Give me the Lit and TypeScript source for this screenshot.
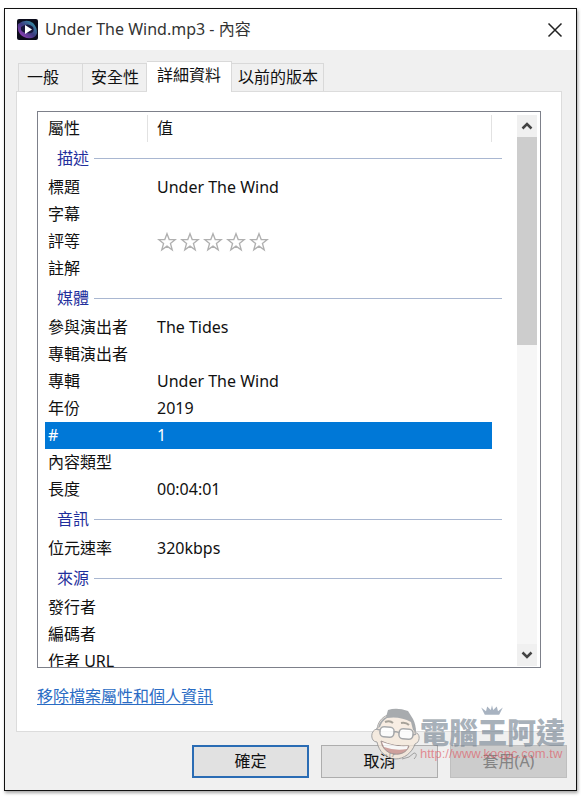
import { LitElement, html, css } from "lit";
import { customElement, state } from "lit/decorators.js";
import { classMap } from "lit/directives/class-map.js";

interface Row {
  name: string;
  value?: string;
  stars?: boolean;
}
interface Group {
  title: string;
  rows: Row[];
}

const GROUPS: Group[] = [
  {
    title: "描述",
    rows: [
      { name: "標題", value: "Under The Wind" },
      { name: "字幕" },
      { name: "評等", stars: true },
      { name: "註解" },
    ],
  },
  {
    title: "媒體",
    rows: [
      { name: "參與演出者", value: "The Tides" },
      { name: "專輯演出者" },
      { name: "專輯", value: "Under The Wind" },
      { name: "年份", value: "2019" },
      { name: "#", value: "1" },
      { name: "內容類型" },
      { name: "長度", value: "00:04:01" },
    ],
  },
  { title: "音訊", rows: [{ name: "位元速率", value: "320kbps" }] },
  {
    title: "來源",
    rows: [{ name: "發行者" }, { name: "編碼者" }, { name: "作者 URL" }],
  },
];

const TABS = ["一般", "安全性", "詳細資料", "以前的版本"];

@customElement("site-watermark")
export class SiteWatermark extends LitElement {
  static styles = css`
    :host {
      display: flex;
      align-items: flex-end;
      pointer-events: none;
    }
    .face {
      flex: none;
      width: 50px;
      height: 54px;
      opacity: 0.75;
    }
    .words {
      display: flex;
      flex-direction: column;
      white-space: nowrap;
    }
    .crown {
      width: 24px;
      height: 12px;
      align-self: center;
      opacity: 0.7;
    }
    .name {
      font: 900 29px/30px "Noto Sans CJK TC", sans-serif;
      color: rgba(110, 124, 140, 0.6);
    }
    .url {
      font: 13px/16px "Liberation Sans", sans-serif;
      color: rgba(225, 80, 90, 0.6);
    }
  `;

  render() {
    return html`
      <svg class="face" viewBox="0 0 50 54" aria-hidden="true">
        <path d="M7 21C8 14 12 9 18 7l20 3c5 3 7 8 7 15 5-1 6 9 0 11-3 9-11 15-20 15-9-1-16-7-18-17C0 34 0 22 7 21z" fill="#f6e8da" stroke="#8a8a8a" />
        <path d="M8 20c1-5 4-9 8-11l2-7q9-3 20 1l5 8c2 4 3 8 3 13l-3-2-2-8q-11-6-24-4-5 3-7 9z" fill="#8b8f94" />
        <path d="M15 14q5-2 8 1M31 15q5-1 8 2" fill="none" stroke="#8a8378" stroke-width="2" />
        <rect x="10" y="19" width="14" height="10" rx="4" fill="#fff" stroke="#8d8f92" stroke-width="1.500" transform="rotate(5 17 24)" />
        <rect x="29" y="21" width="14" height="10" rx="4" fill="#fff" stroke="#8d8f92" stroke-width="1.500" transform="rotate(5 36 26)" />
        <path d="M24 24q3-1 5 1M10 22l-4-1M43 27l3-1" fill="none" stroke="#8d8f92" stroke-width="1.500" />
        <path d="M11 33q13 6 28 5c-2 6-8 9-15 8s-12-6-13-13z" fill="#c88b86" stroke="#8a7a78" />
        <path d="M12 34q13 5 26 4l-1 3q-12 2-23-2z" fill="#fff" />
        <path d="M32 51q8-1 12-6c3 0 3 3 0 6" fill="none" stroke="#8a8a8a" />
      </svg>
      <div class="words">
        <svg class="crown" viewBox="0 0 20 10" aria-hidden="true">
          <path d="M1 3l4 3 1-4 3 3 1-4 1 4 3-3 1 4 4-3-3 6H4z" fill="#8494a8" />
        </svg>
        <span class="name">電腦王阿達</span>
        <span class="url">http://www.kocpc.com.tw</span>
      </div>
    `;
  }
}

@customElement("app-root")
export class AppRoot extends LitElement {
  @state() private tab = "詳細資料";
  @state() private selected = "#";

  static styles = css`
    :host {
      display: block;
      box-sizing: border-box;
      height: 100vh;
      padding: 8px 4px 9px;
      background: #fff;
      color: #111;
      font: 16px/27px "Noto Sans", "Noto Sans CJK TC", sans-serif;
    }
    * {
      box-sizing: border-box;
    }
    button {
      font: inherit;
      color: inherit;
      padding: 0;
      margin: 0;
    }
    .window {
      position: relative;
      display: flex;
      flex-direction: column;
      height: 100%;
      border: 1px solid #111;
      background: #f0f0f0;
      box-shadow: 1px 2px 3px rgba(0, 0, 0, 0.35);
    }
    .titlebar {
      flex: none;
      display: flex;
      align-items: center;
      height: 41px;
      padding: 0 13px 0 12px;
      background: #fff;
    }
    .app-icon {
      width: 21px;
      height: 21px;
      margin-right: 7px;
    }
    .title {
      flex: 1;
      margin: 0;
      font-size: 16px;
      font-weight: 400;
      color: #333;
    }
    .close {
      display: flex;
      border: 0;
      background: none;
    }
    .close svg {
      width: 16px;
      height: 16px;
    }
    .tabs {
      flex: none;
      display: flex;
      align-items: flex-end;
      height: 41px;
      padding: 0 13px;
    }
    .tab {
      height: 28px;
      padding: 0 7px 0 8px;
      border: 1px solid #d9d9d9;
      border-left-width: 0;
      border-bottom: 0;
      background: #f0f0f0;
      text-align: left;
    }
    .tab:first-child {
      border-left-width: 1px;
      padding-right: 23px;
    }
    .tab:last-child {
      padding-left: 6px;
      padding-right: 5px;
    }
    .tab.active {
      height: 31px;
      margin-bottom: -1px;
      padding: 0 10px 4px;
      background: #fff;
      z-index: 1;
    }
    .pane {
      flex: 1;
      min-height: 0;
      display: flex;
      flex-direction: column;
      margin: 0 14px 0 11px;
      padding: 19px 20px 21px;
      border: 1px solid #dcdcdc;
      background: #fff;
    }
    .list {
      flex: 1;
      min-height: 0;
      display: flex;
      border: 1px solid #7d808a;
      padding: 0 3px 0 7px;
    }
    .viewport {
      flex: 1;
      overflow: hidden;
      margin-right: 15px;
    }
    table {
      width: 100%;
      table-layout: fixed;
      border-collapse: collapse;
    }
    .col-name {
      width: 103px;
    }
    .col-rest {
      width: 10px;
    }
    th,
    td {
      height: 27px;
      padding: 0;
      font-weight: 400;
      text-align: left;
      white-space: nowrap;
    }
    .head {
      height: 30px;
      padding: 3px 0 0;
    }
    .cell {
      display: block;
      padding: 0 3px;
      border-right: 1px solid #e2e2e2;
    }
    .value {
      padding-left: 9px;
    }
    .name {
      padding-left: 3px;
    }
    .group {
      height: 32px;
      padding-left: 12px;
      color: #1f2f9c;
    }
    .group-line {
      display: flex;
      align-items: center;
      gap: 5px;
    }
    .group-line::after {
      content: "";
      flex: 1;
      height: 1px;
      background: #a9b7d1;
    }
    .selected .name,
    .selected .value {
      background: #0078d7;
      color: #fff;
    }
    .stars {
      display: flex;
      gap: 3px;
    }
    .stars svg {
      width: 20px;
      height: 20px;
    }
    .scrollbar {
      display: flex;
      flex-direction: column;
      width: 20px;
      margin: 3px 0 1px;
      background: #f6f6f6;
    }
    .scrollbar button {
      flex: none;
      display: flex;
      align-items: center;
      justify-content: center;
      height: 22px;
      border: 0;
      background: #f0f0f0;
    }
    .scrollbar svg {
      width: 12px;
      height: 8px;
    }
    .track {
      flex: 1;
    }
    .thumb {
      height: 41%;
      background: #cdcdcd;
    }
    .remove {
      align-self: flex-start;
      margin-top: 15px;
      color: #2a6cc4;
      text-underline-offset: 2px;
    }
    .actions {
      flex: none;
      display: flex;
      justify-content: flex-end;
      gap: 12px;
      padding: 13px 9px 12px;
    }
    .action {
      width: 117px;
      height: 33px;
      border: 1px solid #adadad;
      background: #e1e1e1;
    }
    .action.primary {
      border: 2px solid #2a6cb4;
    }
    .action:disabled {
      background: #ccc;
      border-color: #bfbfbf;
      color: #838383;
    }
    site-watermark {
      position: absolute;
      right: 11px;
      bottom: 28px;
    }
  `;

  private star() {
    return html`<svg viewBox="0 0 18 18" aria-hidden="true">
      <path d="M9 1.500l2 5.300h5.500l-4.400 3.500 1.600 5.700L9 12.700l-4.700 3.300 1.600-5.700L1.500 6.800H7z" fill="#fff" stroke="#b0b0b0" stroke-width="1.200" />
    </svg>`;
  }

  private chevron(d: string) {
    return html`<svg viewBox="0 0 12 8" aria-hidden="true">
      <path d=${d} fill="none" stroke="#444" stroke-width="2.500" />
    </svg>`;
  }

  render() {
    return html`
      <div class="window" role="dialog" aria-labelledby="title">
        <header class="titlebar">
          <svg class="app-icon" viewBox="0 0 21 21" aria-hidden="true">
            <defs>
              <linearGradient id="swirl" x1="1" y1="0" x2="0" y2="1">
                <stop offset="0" stop-color="#35b0b5" />
                <stop offset="0.500" stop-color="#3d3a80" />
                <stop offset="1" stop-color="#b03fcb" />
              </linearGradient>
            </defs>
            <rect width="21" height="21" rx="2" fill="#0c0c1c" />
            <path d="M1 5Q9-1 16 4q4 4 4 10-1 4-5 5-8 1-12-4-3-4-2-10z" fill="url(#swirl)" />
            <path d="M4 8q7-5 12 0 2 5-2 6-7 1-10-3z" fill="#17163a" />
            <path d="M8 6l7 4.500-7 4.500z" fill="#fff" />
          </svg>
          <h1 class="title" id="title">Under The Wind.mp3 - 內容</h1>
          <button class="close" aria-label="關閉">
            <svg viewBox="0 0 16 16"><path d="M1.500 1.500l13 13M14.500 1.500l-13 13" stroke="#222" stroke-width="1.500" /></svg>
          </button>
        </header>

        <nav class="tabs" role="tablist">
          ${TABS.map(
            (t) => html`<button
              role="tab"
              class=${classMap({ tab: true, active: t === this.tab })}
              aria-selected=${t === this.tab ? "true" : "false"}
              @click=${() => (this.tab = t)}
            >${t}</button>`
          )}
        </nav>

        <main class="pane">
          <div class="list">
            <div class="viewport">
              <table>
                <colgroup>
                  <col class="col-name" />
                  <col />
                  <col class="col-rest" />
                </colgroup>
                <thead>
                  <tr>
                    <th class="head" scope="col"><span class="cell">屬性</span></th>
                    <th class="head" scope="col"><span class="cell value">值</span></th>
                    <td class="head"></td>
                  </tr>
                </thead>
                ${GROUPS.map(
                  (g) => html`<tbody>
                    <tr>
                      <th class="group" colspan="3" scope="rowgroup"><div class="group-line">${g.title}</div></th>
                    </tr>
                    ${g.rows.map(
                      (r) => html`<tr
                        class=${classMap({ selected: r.name === this.selected })}
                        @click=${() => (this.selected = r.name)}
                      >
                        <th class="name" scope="row">${r.name}</th>
                        <td class="value">
                          ${r.stars
                            ? html`<div class="stars" role="img" aria-label="0 / 5">${[1, 2, 3, 4, 5].map(() => this.star())}</div>`
                            : r.value ?? ""}
                        </td>
                        <td></td>
                      </tr>`
                    )}
                  </tbody>`
                )}
              </table>
            </div>
            <div class="scrollbar">
              <button aria-label="向上捲動">${this.chevron("M1.500 6.500L6 2l4.500 4.500")}</button>
              <div class="track"><div class="thumb"></div></div>
              <button aria-label="向下捲動">${this.chevron("M1.500 1.500L6 6l4.500-4.500")}</button>
            </div>
          </div>
          <a class="remove" href="#remove">移除檔案屬性和個人資訊</a>
        </main>

        <footer class="actions">
          <button class="action primary">確定</button>
          <button class="action">取消</button>
          <button class="action" disabled>套用(A)</button>
        </footer>
        <site-watermark></site-watermark>
      </div>
    `;
  }
}
